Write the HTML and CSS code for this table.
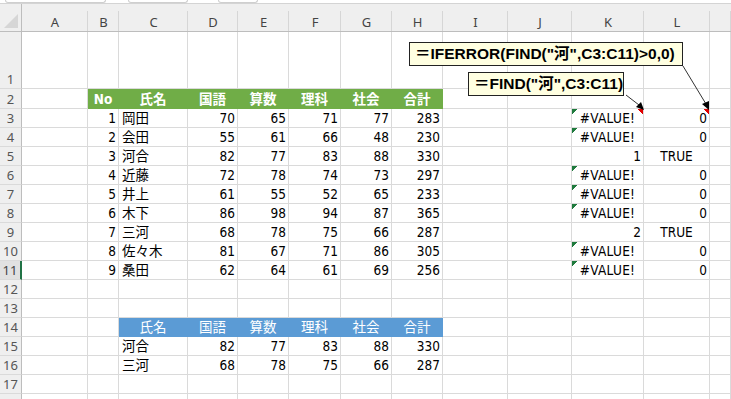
FILE: index.html
```html
<!DOCTYPE html>
<html lang="ja">
<head>
<meta charset="utf-8">
<title>Sheet</title>
<link rel="stylesheet" href="styles.css">
</head>
<body>
<div class="page">
  <div class="topbar">
    <div class="tab tab1"></div>
    <div class="tab tab2"></div>
    <div class="tab tab3"></div>
  </div>
  <div class="sheet">
    <div class="row hdr">
      <div class="c corner"><svg width="14" height="14" viewBox="0 0 14 14"><polygon points="14,0 14,14 0,14" fill="#d6d6d6"/></svg></div>
      <div class="c ch">A</div><div class="c ch">B</div><div class="c ch">C</div><div class="c ch">D</div><div class="c ch">E</div><div class="c ch">F</div><div class="c ch">G</div><div class="c ch">H</div><div class="c ch">I</div><div class="c ch">J</div><div class="c ch">K</div><div class="c ch">L</div><div class="c ch"></div>
    </div>
    <div class="row r1">
      <div class="c rh">1</div><div class="c"></div><div class="c"></div><div class="c"></div><div class="c"></div><div class="c"></div><div class="c"></div><div class="c"></div><div class="c"></div><div class="c"></div><div class="c"></div><div class="c"></div><div class="c"></div><div class="c"></div>
    </div>
    <div class="row r2">
      <div class="c rh">2</div><div class="c"></div>
      <div class="c gh">No</div><div class="c gh">氏名</div><div class="c gh">国語</div><div class="c gh">算数</div><div class="c gh">理科</div><div class="c gh">社会</div><div class="c gh">合計</div>
      <div class="c"></div><div class="c"></div><div class="c"></div><div class="c"></div><div class="c"></div>
    </div>
    <div class="row">
      <div class="c rh">3</div><div class="c"></div>
      <div class="c n">1</div><div class="c t">岡田</div><div class="c n">70</div><div class="c n">65</div><div class="c n">71</div><div class="c n">77</div><div class="c n">283</div>
      <div class="c"></div><div class="c"></div><div class="c ctr err cm">#VALUE!</div><div class="c n cm">0</div><div class="c"></div>
    </div>
    <div class="row">
      <div class="c rh">4</div><div class="c"></div>
      <div class="c n">2</div><div class="c t">会田</div><div class="c n">55</div><div class="c n">61</div><div class="c n">66</div><div class="c n">48</div><div class="c n">230</div>
      <div class="c"></div><div class="c"></div><div class="c ctr err">#VALUE!</div><div class="c n">0</div><div class="c"></div>
    </div>
    <div class="row">
      <div class="c rh">5</div><div class="c"></div>
      <div class="c n">3</div><div class="c t">河合</div><div class="c n">82</div><div class="c n">77</div><div class="c n">83</div><div class="c n">88</div><div class="c n">330</div>
      <div class="c"></div><div class="c"></div><div class="c n">1</div><div class="c ctr">TRUE</div><div class="c"></div>
    </div>
    <div class="row">
      <div class="c rh">6</div><div class="c"></div>
      <div class="c n">4</div><div class="c t">近藤</div><div class="c n">72</div><div class="c n">78</div><div class="c n">74</div><div class="c n">73</div><div class="c n">297</div>
      <div class="c"></div><div class="c"></div><div class="c ctr err">#VALUE!</div><div class="c n">0</div><div class="c"></div>
    </div>
    <div class="row">
      <div class="c rh">7</div><div class="c"></div>
      <div class="c n">5</div><div class="c t">井上</div><div class="c n">61</div><div class="c n">55</div><div class="c n">52</div><div class="c n">65</div><div class="c n">233</div>
      <div class="c"></div><div class="c"></div><div class="c ctr err">#VALUE!</div><div class="c n">0</div><div class="c"></div>
    </div>
    <div class="row">
      <div class="c rh">8</div><div class="c"></div>
      <div class="c n">6</div><div class="c t">木下</div><div class="c n">86</div><div class="c n">98</div><div class="c n">94</div><div class="c n">87</div><div class="c n">365</div>
      <div class="c"></div><div class="c"></div><div class="c ctr err">#VALUE!</div><div class="c n">0</div><div class="c"></div>
    </div>
    <div class="row">
      <div class="c rh">9</div><div class="c"></div>
      <div class="c n">7</div><div class="c t">三河</div><div class="c n">68</div><div class="c n">78</div><div class="c n">75</div><div class="c n">66</div><div class="c n">287</div>
      <div class="c"></div><div class="c"></div><div class="c n">2</div><div class="c ctr">TRUE</div><div class="c"></div>
    </div>
    <div class="row">
      <div class="c rh">10</div><div class="c"></div>
      <div class="c n">8</div><div class="c t">佐々木</div><div class="c n">81</div><div class="c n">67</div><div class="c n">71</div><div class="c n">86</div><div class="c n">305</div>
      <div class="c"></div><div class="c"></div><div class="c ctr err">#VALUE!</div><div class="c n">0</div><div class="c"></div>
    </div>
    <div class="row">
      <div class="c rh sel">11</div><div class="c"></div>
      <div class="c n">9</div><div class="c t">桑田</div><div class="c n">62</div><div class="c n">64</div><div class="c n">61</div><div class="c n">69</div><div class="c n">256</div>
      <div class="c"></div><div class="c"></div><div class="c ctr err">#VALUE!</div><div class="c n">0</div><div class="c"></div>
    </div>
    <div class="row">
      <div class="c rh">12</div><div class="c"></div><div class="c"></div><div class="c"></div><div class="c"></div><div class="c"></div><div class="c"></div><div class="c"></div><div class="c"></div><div class="c"></div><div class="c"></div><div class="c"></div><div class="c"></div><div class="c"></div>
    </div>
    <div class="row">
      <div class="c rh">13</div><div class="c"></div><div class="c"></div><div class="c"></div><div class="c"></div><div class="c"></div><div class="c"></div><div class="c"></div><div class="c"></div><div class="c"></div><div class="c"></div><div class="c"></div><div class="c"></div><div class="c"></div>
    </div>
    <div class="row">
      <div class="c rh">14</div><div class="c"></div><div class="c"></div>
      <div class="c bh">氏名</div><div class="c bh">国語</div><div class="c bh">算数</div><div class="c bh">理科</div><div class="c bh">社会</div><div class="c bh">合計</div>
      <div class="c"></div><div class="c"></div><div class="c"></div><div class="c"></div><div class="c"></div>
    </div>
    <div class="row">
      <div class="c rh">15</div><div class="c"></div><div class="c"></div>
      <div class="c t">河合</div><div class="c n">82</div><div class="c n">77</div><div class="c n">83</div><div class="c n">88</div><div class="c n">330</div>
      <div class="c"></div><div class="c"></div><div class="c"></div><div class="c"></div><div class="c"></div>
    </div>
    <div class="row">
      <div class="c rh">16</div><div class="c"></div><div class="c"></div>
      <div class="c t">三河</div><div class="c n">68</div><div class="c n">78</div><div class="c n">75</div><div class="c n">66</div><div class="c n">287</div>
      <div class="c"></div><div class="c"></div><div class="c"></div><div class="c"></div><div class="c"></div>
    </div>
    <div class="row">
      <div class="c rh">17</div><div class="c"></div><div class="c"></div><div class="c"></div><div class="c"></div><div class="c"></div><div class="c"></div><div class="c"></div><div class="c"></div><div class="c"></div><div class="c"></div><div class="c"></div><div class="c"></div><div class="c"></div>
    </div>
    <div class="row">
      <div class="c rh"></div><div class="c"></div><div class="c"></div><div class="c"></div><div class="c"></div><div class="c"></div><div class="c"></div><div class="c"></div><div class="c"></div><div class="c"></div><div class="c"></div><div class="c"></div><div class="c"></div><div class="c"></div>
    </div>
  </div>

  <svg class="arrows" width="731" height="399" viewBox="0 0 731 399">
    <line x1="683" y1="66" x2="706" y2="104" stroke="#333" stroke-width="1"/>
    <polygon points="709,110 702,104 709,101" fill="#000"/>
    <line x1="626" y1="95" x2="639" y2="105" stroke="#333" stroke-width="1"/>
    <polygon points="644,110 636,107 641,102" fill="#000"/>
  </svg>
  <div class="callout c1">＝IFERROR(FIND("河",C3:C11)&gt;0,0)</div>
  <div class="callout c2">＝FIND("河",C3:C11)</div>
</div>
</body>
</html>
```
FILE: styles.css
```css
* { box-sizing: border-box; }
html, body { margin: 0; padding: 0; background: #fff; }
.page {
  position: relative;
  width: 731px;
  height: 399px;
  overflow: hidden;
}
.topbar {
  display: flex;
  height: 3px;
  background: #fff;
}
.tab {
  height: 3px;
  border: 1px solid #cfcfcf;
  border-top: none;
  border-radius: 0 0 4px 4px;
}
.tab1 { margin-left: 5px; width: 101px; }
.tab2 { margin-left: 22px; width: 60px; }
.tab3 { margin-left: 30px; width: 40px; }

.sheet {
  font-family: "DejaVu Sans Condensed", "Noto Sans CJK JP", sans-serif;
  font-size: 13.5px;
  color: #000;
  border-top: 1px solid #d4d4d4;
}
.row {
  display: grid;
  grid-template-columns: 22px 66px 31px 69px 50px 51px 52px 51px 51px 65px 64px 72px 66px 21px;
  height: 19px;
}
.row.hdr { height: 28px; }
.row.r1 { height: 57px; }
.row.r2 { height: 20px; }

.c {
  display: flex;
  align-items: flex-end;
  line-height: 18px;
  padding: 0 2px;
  white-space: nowrap;
  overflow: hidden;
  border-right: 1px solid #dadada;
  border-bottom: 1px solid #dadada;
}
.hdr .c {
  align-items: center;
  justify-content: center;
  background: linear-gradient(#d6d6d6, #d6d6d6) right bottom / 1px 20px no-repeat, #efefef;
  border-right: none;
  border-bottom: 1px solid #bdbdbd;
  color: #444;
  font-family: "Noto Sans", "DejaVu Sans", sans-serif;
  font-size: 13px;
  padding-top: 8px;
}
.hdr .corner {
  border-right: 1px solid #bdbdbd;
  background: #efefef;
  justify-content: flex-end;
  align-items: flex-end;
  padding: 0 3px 3px 0;
}
.corner svg { display: block; }
.rh {
  background: #efefef;
  border-right-color: #bdbdbd;
  justify-content: center;
  color: #555;
  font-family: "Noto Sans", "DejaVu Sans", sans-serif;
  font-size: 13px;
  padding: 0;
  line-height: 18px;
}
.rh.sel {
  background: #e1e1e1;
  border-right: 2px solid #217346;
  color: #444;
}
.n { justify-content: flex-end; }
.t { justify-content: flex-start; padding-left: 3px; }
.ctr { justify-content: center; }

.gh {
  background: #70ad47;
  border-color: #70ad47;
  color: #fff;
  font-weight: bold;
  justify-content: center;
}
.bh {
  background: #5b9bd5;
  border-color: #5b9bd5;
  color: #fff;
  justify-content: center;
}
.err {
  background: linear-gradient(135deg, #1f7a3d 4px, transparent 4px) left top / 8px 8px no-repeat;
  letter-spacing: 0.3px;
}
.cm {
  background: linear-gradient(225deg, #e00000 4px, transparent 4px) right top / 8px 8px no-repeat;
}
.err.cm {
  background:
    linear-gradient(135deg, #1f7a3d 4px, transparent 4px) left top / 8px 8px no-repeat,
    linear-gradient(225deg, #e00000 4px, transparent 4px) right top / 8px 8px no-repeat;
}

.arrows {
  position: absolute;
  left: 0;
  top: 0;
  pointer-events: none;
}
.callout {
  position: absolute;
  background: #ffffe1;
  border: 1px solid #222;
  font-family: "Liberation Sans", "Noto Sans CJK JP", sans-serif;
  font-weight: bold;
  font-size: 15.5px;
  line-height: 22px;
  color: #000;
  padding: 0 5px;
  white-space: nowrap;
}
.c1 { left: 409px; top: 42px; width: 274px; height: 24px; }
.c2 { left: 468px; top: 72px; width: 156px; height: 24px; }
```
